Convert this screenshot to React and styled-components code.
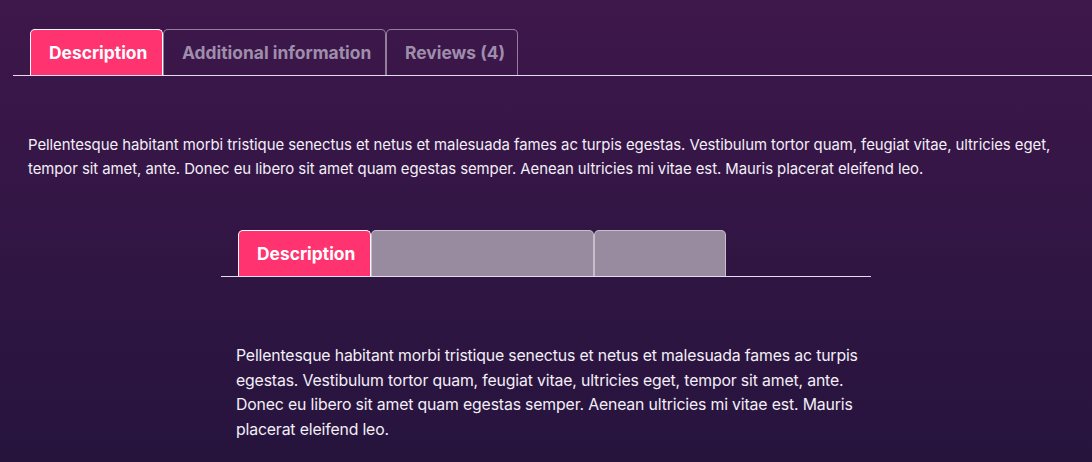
import React, { useState } from "react";
import styled, { createGlobalStyle } from "styled-components";

const GlobalStyle = createGlobalStyle`
  html, body {
    margin: 0;
    padding: 0;
  }
  body {
    background: linear-gradient(180deg, #3e174b 0%, #26143d 100%);
    min-height: 462px;
    font-family: "Inter", "Noto Sans", sans-serif;
    color: #f1ecf5;
  }
`;

const tabs = ["Description", "Additional information", "Reviews (4)"];
const text =
  "Pellentesque habitant morbi tristique senectus et netus et malesuada fames ac turpis egestas. Vestibulum tortor quam, feugiat vitae, ultricies eget, tempor sit amet, ante. Donec eu libero sit amet quam egestas semper. Aenean ultricies mi vitae est. Mauris placerat eleifend leo.";

const Page = styled.div`
  width: 1092px;
  height: 462px;
  overflow: hidden;
  padding-top: 29px;
  box-sizing: border-box;
`;

const Section = styled.section`
  margin: ${(p) => (p.narrow ? "49px auto 0" : "0 0 0 13px")};
  width: ${(p) => (p.narrow ? "650px" : "auto")};
`;

const TabList = styled.div`
  display: flex;
  padding-left: 17px;
  border-bottom: 1px solid #e6dcef;
`;

const Tab = styled.button`
  height: 46px;
  padding: 0 18px;
  box-sizing: border-box;
  border: 1px solid ${(p) => (p.active ? "#ffffff" : "rgba(255,255,255,0.45)")};
  border-bottom: none;
  border-radius: 5px 5px 0 0;
  background: ${(p) => (p.active ? "#ff3370" : p.muted ? "#988ba0" : "transparent")};
  color: ${(p) => (p.active ? "#ffffff" : p.muted ? "transparent" : "#9f8eab")};
  font-family: "Inter", "Noto Sans", sans-serif;
  font-weight: 700;
  font-size: 17.4px;
  white-space: nowrap;
  cursor: pointer;
  width: ${(p) => p.w}px;
`;

const Text = styled.p`
  margin: ${(p) => (p.narrow ? "67px 0 0 15px" : "57px 15px 0")};
  font-size: ${(p) => (p.narrow ? "15.8px" : "14.9px")};
  line-height: ${(p) => (p.narrow ? "24.5px" : "24px")};
  letter-spacing: ${(p) => (p.narrow ? "-0.15px" : "-0.05px")};
  color: #f3eef7;
`;

const widths = [133, 223, 132];

const TabBlock = ({ narrow }) => {
  const [active, setActive] = useState(0);
  return (
    <Section narrow={narrow}>
      <TabList>
        {tabs.map((t, i) => (
          <Tab
            key={t}
            w={widths[i]}
            active={i === active}
            muted={narrow && i !== active}
            onClick={() => setActive(i)}
          >
            {t}
          </Tab>
        ))}
      </TabList>
      <Text narrow={narrow}>{text}</Text>
    </Section>
  );
};

export default function App() {
  return (
    <Page>
      <GlobalStyle />
      <TabBlock />
      <TabBlock narrow />
    </Page>
  );
}
